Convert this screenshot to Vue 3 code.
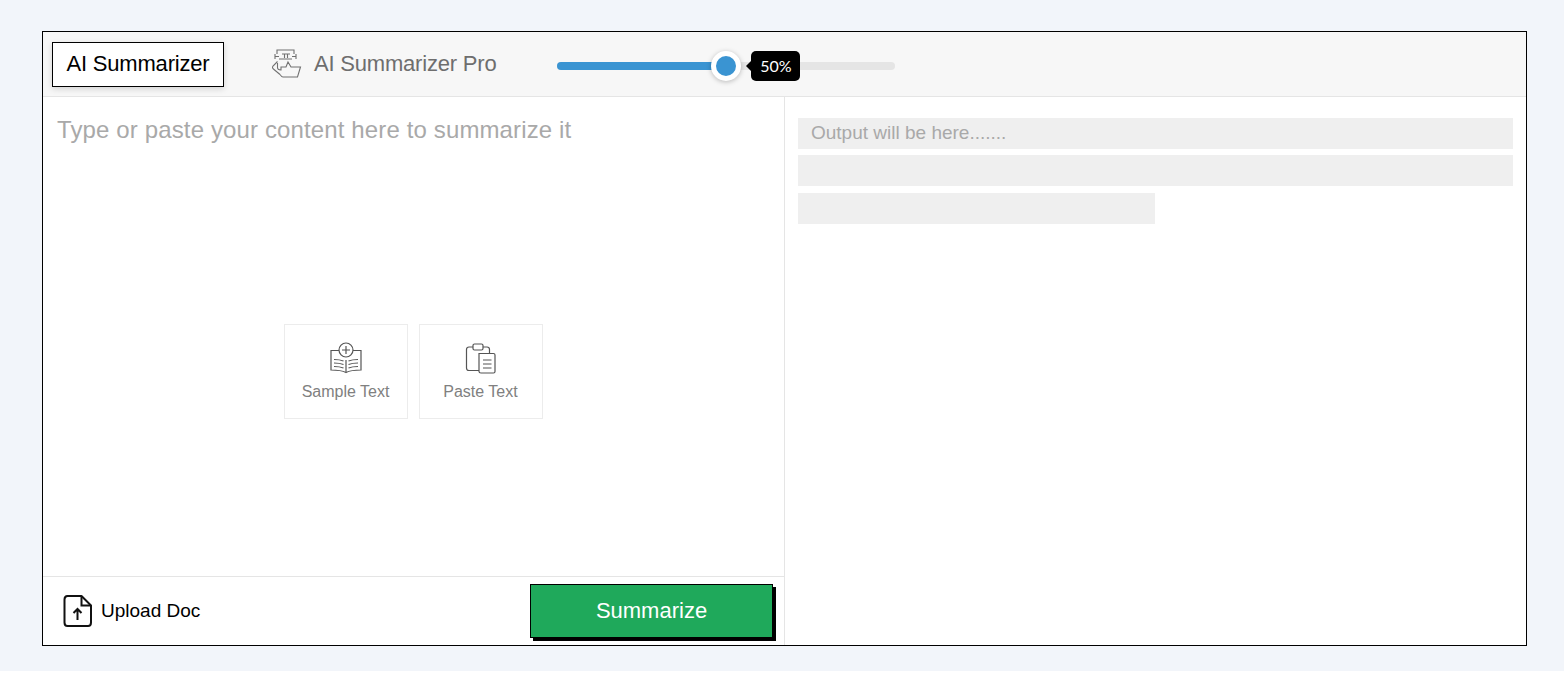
<template>
  <div class="page">
    <div class="frame">
      <div class="top">
        <div class="tab active">AI Summarizer</div>
        <div class="tab-pro">
          <svg width="32" height="32" viewBox="0 0 32 32" fill="none" stroke="#707070" stroke-width="1.100">
            <path d="M7 6V2H24V6" />
            <path d="M5 6V11M5 8.500H9M26 6V11M22 8.500H26" />
            <path d="M12 6H20M14.500 6V10M17.500 6V10M9 11H22" />
            <path d="M7.500 13.500L3 18C2 19.500 2.500 20.500 4 21.500L10 26.500" />
            <path d="M7.500 15V19.500C7.500 21 9 22 11 22V19H16L18 14L21 19H30.500L27.500 29H13C12 29 11 28 10 26.500" />
          </svg>
          <span>AI Summarizer Pro</span>
        </div>
        <div class="slider">
          <div class="fill" :style="{ width: percent + '%' }"></div>
          <div class="thumb" :style="{ left: percent + '%' }"></div>
          <div class="bubble" :style="{ left: percent + '%' }">{{ percent }}%</div>
        </div>
      </div>
      <div class="main">
        <div class="left">
          <div class="input-area">
            <div class="placeholder">Type or paste your content here to summarize it</div>
            <div class="samples">
              <div class="sample">
                <svg width="34" height="32" viewBox="0 0 34 32" fill="none" stroke="#555" stroke-width="1.200">
                  <circle cx="17" cy="8" r="7" />
                  <path d="M17 4V12M13 8H21" />
                  <path d="M10 8.500H2V28C8 28 13 28.500 17 30.500C21 28.500 26 28 32 28V8.500H24" />
                  <path d="M17 18V30" />
                  <path d="M5 17.500C9 17.500 12 18 14.500 19M5 21C9 21 12 21.500 14.500 22.500M5 24.500C9 24.500 12 25 14.500 26" />
                  <path d="M29 17.500C25 17.500 22 18 19.500 19M29 21C25 21 22 21.500 19.500 22.500M29 24.500C25 24.500 22 25 19.500 26" />
                </svg>
                <span>Sample Text</span>
              </div>
              <div class="sample">
                <svg width="34" height="32" viewBox="0 0 34 32" fill="none" stroke="#555" stroke-width="1.200">
                  <path d="M9 5H5C3.500 5 2.500 6 2.500 7.500V26C2.500 27.500 3.500 28.500 5 28.500H15" />
                  <path d="M19 5H23C24.500 5 25.500 6 25.500 7.500V11" />
                  <rect x="9" y="2" width="10" height="6" rx="1.500" />
                  <path d="M15 11.500H29.500C30.500 11.500 31 12 31 13V29.500C31 30.500 30.500 31 29.500 31H17C16 31 15 30.500 15 29.500Z" />
                  <path d="M19 18H27.500M19 22H27.500M19 26H27.500" />
                </svg>
                <span>Paste Text</span>
              </div>
            </div>
          </div>
          <div class="bottom">
            <div class="upload">
              <svg width="30" height="32" viewBox="0 0 30 32" fill="none" stroke="#111" stroke-width="2">
                <path d="M4.500 1H18.500L28 10.500V27.500C28 29.500 27 31 25 31H4.500C2.500 31 1.500 29.500 1.500 27.500V4.500C1.500 2.500 2.500 1 4.500 1Z" stroke-linejoin="round" />
                <path d="M18.500 1V10.500H28" />
                <path d="M14.500 25V14M10.500 18L14.500 14L18.500 18" />
              </svg>
              <span>Upload Doc</span>
            </div>
            <button class="go">Summarize</button>
          </div>
        </div>
        <div class="right">
          <div class="line">Output will be here.......</div>
          <div class="line"></div>
          <div class="line short"></div>
        </div>
      </div>
    </div>
  </div>
</template>

<script setup>
const percent = 50
</script>

<style>
body {
  margin: 0;
  background: #fff;
}
</style>

<style scoped>
.page {
  box-sizing: border-box;
  width: 1564px;
  height: 671px;
  padding: 31px 37px 25px 42px;
  background: #f2f5fa;
  font-family: "Liberation Sans", Arial, sans-serif;
}
.frame {
  box-sizing: border-box;
  height: 615px;
  border: 1px solid #000;
  background: #fff;
  display: flex;
  flex-direction: column;
}
.top {
  box-sizing: border-box;
  height: 65px;
  flex: none;
  display: flex;
  align-items: center;
  padding-left: 9px;
  background: #f7f7f7;
  border-bottom: 1px solid #e5e5e5;
}
.tab.active {
  box-sizing: border-box;
  width: 172px;
  height: 45px;
  border: 1px solid #000;
  background: #fff;
  box-shadow: 0 2px 6px rgba(0, 0, 0, 0.15);
  display: flex;
  align-items: center;
  justify-content: center;
  font-size: 22px;
  letter-spacing: -0.2px;
  color: #000;
}
.tab-pro {
  display: flex;
  align-items: center;
  gap: 12px;
  margin-left: 46px;
  font-size: 22px;
  letter-spacing: -0.2px;
  color: #6e6e6e;
}
.slider {
  position: relative;
  width: 338px;
  height: 8px;
  margin-left: 61px;
  margin-top: 4px;
  border-radius: 4px;
  background: #e5e5e5;
}
.fill {
  height: 8px;
  border-radius: 4px;
  background: #3a94d2;
}
.thumb {
  position: absolute;
  top: -11px;
  box-sizing: border-box;
  width: 30px;
  height: 30px;
  margin-left: -15px;
  border: 5px solid #fff;
  border-radius: 50%;
  background: #3a94d2;
  box-shadow: 0 1px 5px rgba(0, 0, 0, 0.25);
}
.bubble {
  position: absolute;
  top: -11px;
  margin-left: 25px;
  width: 49px;
  height: 30px;
  border-radius: 5px;
  background: #000;
  color: #fff;
  font-family: Lato, sans-serif;
  font-size: 16px;
  line-height: 30px;
  text-align: center;
}
.bubble::before {
  content: "";
  position: absolute;
  left: -5px;
  top: 10px;
  border-top: 5px solid transparent;
  border-bottom: 5px solid transparent;
  border-right: 5px solid #000;
}
.main {
  flex: 1;
  min-height: 0;
  display: flex;
}
.left {
  box-sizing: border-box;
  width: 742px;
  flex: none;
  display: flex;
  flex-direction: column;
  border-right: 1px solid #e5e5e5;
}
.input-area {
  flex: 1;
  position: relative;
  display: flex;
  align-items: center;
  justify-content: center;
}
.placeholder {
  position: absolute;
  left: 14px;
  top: 19px;
  font-size: 24px;
  letter-spacing: 0.13px;
  color: #a9a9a9;
}
.samples {
  display: flex;
  gap: 11px;
  margin-left: -1px;
  margin-top: 69px;
}
.sample {
  box-sizing: border-box;
  width: 124px;
  height: 95px;
  border: 1px solid #ececec;
  display: flex;
  flex-direction: column;
  align-items: center;
  padding-top: 17px;
  font-size: 16px;
  color: #808080;
}
.sample span {
  margin-top: 9px;
}
.bottom {
  box-sizing: border-box;
  height: 69px;
  flex: none;
  display: flex;
  align-items: flex-start;
  justify-content: space-between;
  padding: 7px 11px 0 20px;
  border-top: 1px solid #e5e5e5;
}
.upload {
  display: flex;
  align-items: center;
  gap: 8px;
  height: 54px;
  font-size: 19px;
  color: #000;
}
.go {
  box-sizing: border-box;
  width: 243px;
  height: 54px;
  border: 1px solid #000;
  background: #1fa95b;
  box-shadow: 3px 3px 0 #000;
  color: #fff;
  font-family: inherit;
  font-size: 22px;
  padding: 0;
}
.right {
  flex: 1;
  padding: 21px 13px 0 13px;
  display: flex;
  flex-direction: column;
  gap: 6px;
}
.line {
  height: 31px;
  line-height: 30px;
  padding-left: 13px;
  background: #efefef;
  font-size: 19px;
  color: #a9a9a9;
}
.line.short {
  width: 357px;
  margin-top: 1px;
  box-sizing: border-box;
}
</style>
